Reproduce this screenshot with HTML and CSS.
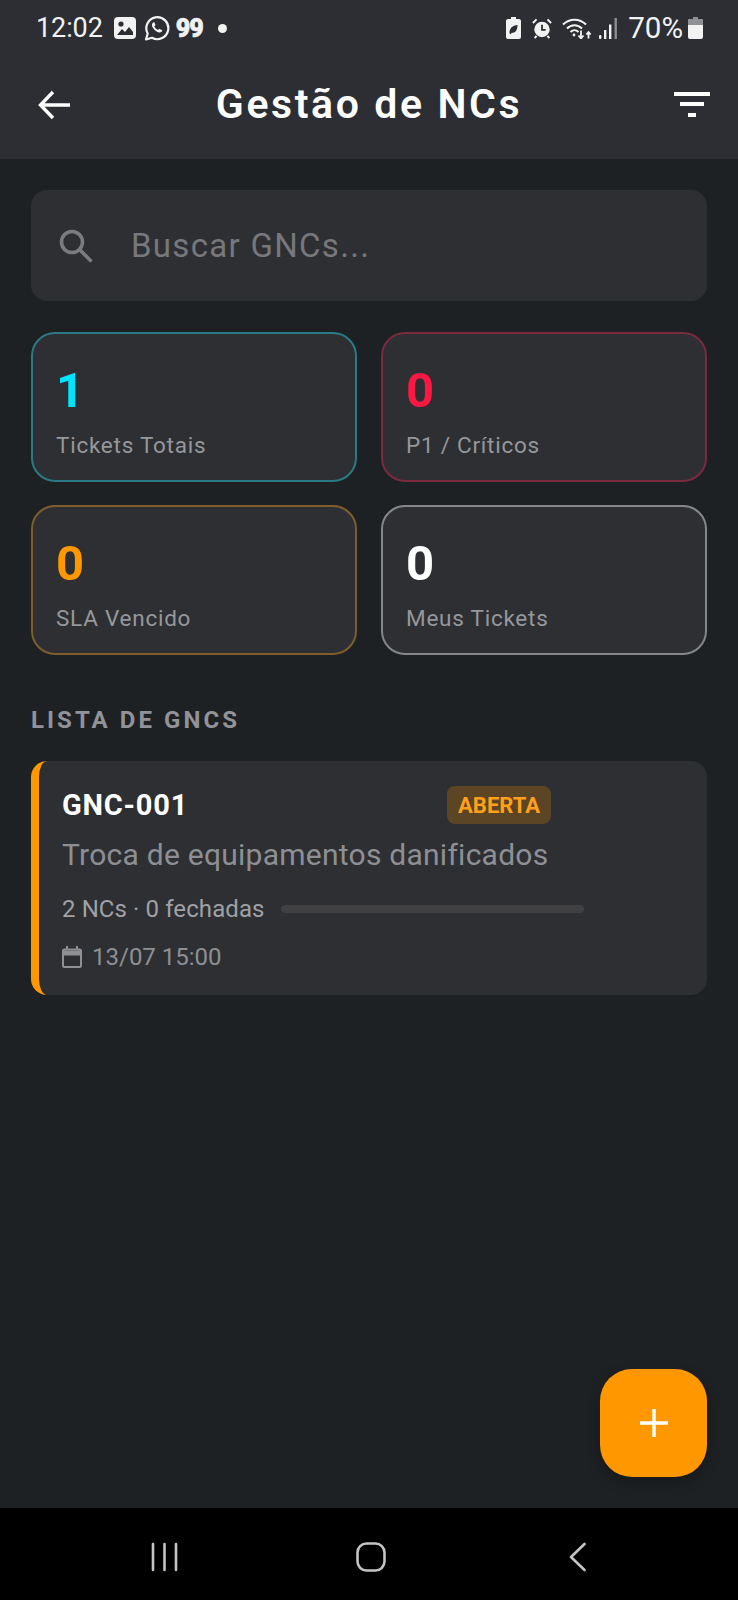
FILE: index.html
```html
<!DOCTYPE html>
<html lang="pt-BR">
<head>
    <meta charset="UTF-8">
    <meta name="viewport" content="width=device-width, initial-scale=1.0">
    <title>Gestão de NCs</title>
    <link rel="stylesheet" href="styles.css">
</head>
<body>
    <div class="top">
        <div class="status-bar">
            <div class="status-left">
                <span class="clock">12:02</span>
                <svg class="ic-photo" viewBox="0 0 22 22"><rect x="0" y="0" width="22" height="22" rx="4" fill="#f2f2f2"/><circle cx="7" cy="7" r="2.600" fill="#2c2e33"/><path d="M3 18l5-6 3 3 4-5 4 5v3H3z" fill="#2c2e33"/></svg>
                <svg class="ic-whatsapp" viewBox="0 0 26 26" fill="none"><path d="M2 24.500l1.700-6A11 11 0 1 1 8 22.800z" stroke="#f2f2f2" stroke-width="2.200" stroke-linejoin="round"/><path d="M9.200 7.500c-1.500 1-1.800 3-.3 5.300 1.500 2.400 3.800 4.300 6.200 4.700 1.600.2 3-.7 3.200-2.200l-3-1.600-1.300 1.300c-1.500-.6-3-2.200-3.700-3.700l1.200-1.300-1.300-2.900z" fill="#f2f2f2"/></svg>
                <span class="app-99">99</span>
                <span class="dot"></span>
            </div>
            <div class="status-right">
                <svg class="ic-saver" viewBox="0 0 15 22"><path d="M5 0h5v2h3a2 2 0 0 1 2 2v16a2 2 0 0 1-2 2H2a2 2 0 0 1-2-2V4a2 2 0 0 1 2-2h3z" fill="#f2f2f2"/><path d="M3.500 16c0-5 3-7.500 8-8 0 5-2 8-6 8l-1 1.500z" fill="#2c2e33"/></svg>
                <svg class="ic-alarm" viewBox="0 0 22 22"><circle cx="11" cy="12" r="8.500" fill="#f2f2f2"/><path d="M11 7v5.500h4" stroke="#2c2e33" stroke-width="2" fill="none"/><path d="M1 5l4-4M21 5l-4-4M5 19l-2 2.500M17 19l2 2.500" stroke="#f2f2f2" stroke-width="2.200" fill="none"/></svg>
                <svg class="ic-wifi" viewBox="0 0 30 22" fill="none" stroke="#f2f2f2"><path d="M1 7.500C7.500 1 17.500 1 24 7.500" stroke-width="2"/><path d="M5 11.500c4.500-4.500 10.500-4.500 15 0" stroke-width="2"/><path d="M8.500 15c2.500-2.500 5.500-2.500 8 0" stroke-width="2"/><circle cx="12" cy="18" r="1.400" fill="#f2f2f2" stroke="none"/><path d="M19 13.500v7.500M16.500 18.500l2.500 3 2.500-3" stroke-width="1.800"/><path d="M26.500 21.500v-6M24.300 17.500l2.200-2.500 2.200 2.500" stroke-width="1.800"/></svg>
                <svg class="ic-signal" viewBox="0 0 18 21"><rect x="0" y="17" width="2.400" height="4" rx="1" fill="#f2f2f2"/><rect x="5" y="12" width="2.400" height="9" fill="#f2f2f2"/><rect x="10" y="6.500" width="2.400" height="14.500" fill="#f2f2f2"/><rect x="15.500" y="0" width="2.400" height="21" fill="#8b8d90"/></svg>
                <span class="battery-text">70%</span>
                <svg class="ic-battery" viewBox="0 0 15 22"><path d="M5 0h5v2h3a2 2 0 0 1 2 2v16a2 2 0 0 1-2 2H2a2 2 0 0 1-2-2V4a2 2 0 0 1 2-2h3z" fill="#f2f2f2"/><path d="M5 0h5v2h3a2 2 0 0 1 2 2v4H0V4a2 2 0 0 1 2-2h3z" fill="#8f9093"/></svg>
            </div>
        </div>
        <header class="app-bar">
            <svg class="ic-back" viewBox="0 0 32 30" fill="none" stroke="#fff" stroke-width="3.400"><path d="M32 15H3M15 2L2.500 15 15 28"/></svg>
            <h1>Gestão de NCs</h1>
            <svg class="ic-filter" viewBox="0 0 36 25" fill="#fff"><rect x="0" y="0" width="36" height="4"/><rect x="6" y="10" width="24" height="4"/><rect x="14" y="21" width="8" height="4"/></svg>
        </header>
    </div>

    <main class="content">
        <div class="search">
            <svg class="ic-search" viewBox="0 0 36 36" fill="none" stroke="#7b7c80" stroke-width="3.600"><circle cx="14" cy="14" r="10.500"/><path d="M22 22l11.500 11.500"/></svg>
            <span>Buscar GNCs...</span>
        </div>

        <div class="stats">
            <div class="stat stat-blue"><strong>1</strong><span>Tickets Totais</span></div>
            <div class="stat stat-red"><strong>0</strong><span>P1 / Críticos</span></div>
            <div class="stat stat-orange"><strong>0</strong><span>SLA Vencido</span></div>
            <div class="stat stat-white"><strong>0</strong><span>Meus Tickets</span></div>
        </div>

        <h2 class="section-title">LISTA DE GNCS</h2>

        <article class="gnc-card">
            <div class="gnc-head">
                <span class="gnc-id">GNC-001</span>
                <span class="badge">ABERTA</span>
            </div>
            <p class="gnc-desc">Troca de equipamentos danificados</p>
            <div class="gnc-progress">
                <span>2 NCs · 0 fechadas</span>
                <div class="bar"></div>
            </div>
            <div class="gnc-date">
                <svg class="ic-cal" viewBox="0 0 20 22" fill="none" stroke="#8f9094" stroke-width="2"><rect x="1" y="3.500" width="18" height="17.500" rx="1.500"/><path d="M1 7h18" stroke-width="5"/><path d="M5 0v4M15 0v4"/></svg>
                <span>13/07 15:00</span>
            </div>
        </article>

        <button class="fab" aria-label="Novo">
            <svg viewBox="0 0 28 28" stroke="#fff" stroke-width="3.400"><path d="M0 14h28M14 0v28"/></svg>
        </button>
    </main>

    <nav class="nav-bar">
        <svg class="ic-recent" viewBox="0 0 27 30" stroke="#c4c4c4" stroke-width="2.600" stroke-linecap="round"><path d="M2 2v26M13.500 2v26M25 2v26"/></svg>
        <svg class="ic-home" viewBox="0 0 30 30" fill="none" stroke="#c4c4c4" stroke-width="2.600"><rect x="1.500" y="1.500" width="27" height="27" rx="9"/></svg>
        <svg class="ic-navback" viewBox="0 0 17 30" fill="none" stroke="#c4c4c4" stroke-width="2.600" stroke-linecap="round" stroke-linejoin="round"><path d="M15.500 2L2 15l13.500 13"/></svg>
    </nav>
</body>
</html>
```

FILE: styles.css
```css
* {
    margin: 0;
    padding: 0;
    box-sizing: border-box;
}
body {
    width: 738px;
    height: 1600px;
    overflow: hidden;
    display: flex;
    flex-direction: column;
    font-family: Roboto, "Liberation Sans", sans-serif;
    background: #1e2124;
    color: #fff;
}
svg {
    display: block;
    flex: none;
}

/* top */
.top {
    height: 159px;
    background: #2c2e33;
}
.status-bar {
    height: 56px;
    padding: 0 35px 0 36px;
    display: flex;
    align-items: center;
    justify-content: space-between;
    color: #f2f2f2;
}
.status-left, .status-right {
    display: flex;
    align-items: center;
}
.clock {
    font-size: 27px;
    letter-spacing: -.1px;
    margin-right: 11px;
}
.ic-photo {
    width: 22px;
    height: 22px;
    margin-right: 8px;
}
.ic-whatsapp {
    width: 26px;
    height: 26px;
    margin-right: 6px;
}
.app-99 {
    font-size: 25px;
    font-weight: 900;
    letter-spacing: -1px;
    -webkit-text-stroke: .6px #f2f2f2;
    margin-right: 15px;
}
.dot {
    width: 9px;
    height: 9px;
    border-radius: 50%;
    background: #f2f2f2;
}
.ic-saver {
    width: 15px;
    height: 22px;
    margin-right: 11px;
}
.ic-alarm {
    width: 20px;
    height: 21px;
    margin-right: 10px;
}
.ic-wifi {
    width: 30px;
    height: 22px;
    margin-right: 7px;
}
.ic-signal {
    width: 18px;
    height: 21px;
    margin-right: 11px;
}
.battery-text {
    font-size: 29.500px;
    margin-right: 5px;
}
.ic-battery {
    width: 15px;
    height: 22px;
}
.app-bar {
    height: 103px;
    padding: 0 28px 6px;
    display: grid;
    grid-template-columns: 1fr auto 1fr;
    align-items: center;
}
.ic-back {
    width: 32px;
    height: 30px;
    margin-left: 10px;
}
.app-bar h1 {
    margin-bottom: 2px;
    font-size: 41px;
    font-weight: 600;
    letter-spacing: 2.600px;
}
.ic-filter {
    width: 36px;
    height: 25px;
    justify-self: end;
}

/* content */
.content {
    flex: 1;
    position: relative;
    padding: 31px 31px 0;
}
.search {
    height: 111px;
    padding: 0 33px 0 27px;
    display: flex;
    align-items: center;
    gap: 37px;
    background: #2d2f33;
    border-radius: 16px;
    font-size: 33px;
    letter-spacing: 1.300px;
    color: #77787c;
}
.ic-search {
    width: 36px;
    height: 36px;
}
.stats {
    margin-top: 31px;
    display: grid;
    grid-template-columns: 326px 326px;
    grid-auto-rows: 150px;
    justify-content: space-between;
    row-gap: 23px;
}
.stat {
    padding: 7px 23px 0;
    display: flex;
    flex-direction: column;
    justify-content: center;
    background: #2d2f33;
    border: 2px solid;
    border-radius: 24px;
}
.stat strong {
    font-size: 49px;
    line-height: 58px;
    font-weight: 700;
}
.stat span {
    margin-top: 11px;
    font-size: 22.500px;
    line-height: 28px;
    letter-spacing: .75px;
    color: #96979b;
}
.stat-blue { border-color: #2a7a84; }
.stat-blue strong { color: #00e5ff; }
.stat-red { border-color: #7c2a40; }
.stat-red strong { color: #ff1744; }
.stat-orange { border-color: #7d5d2c; }
.stat-orange strong { color: #ff9800; }
.stat-white { border-color: #84868a; }

.section-title {
    margin-top: 51px;
    font-size: 24px;
    line-height: 28px;
    font-weight: 700;
    letter-spacing: 3.050px;
    color: #929398;
}
.gnc-card {
    height: 234px;
    margin-top: 27px;
    padding: 25px 0 0 23px;
    background: #2d2f33;
    border-left: 8px solid #ff9800;
    border-radius: 16px;
}
.gnc-head {
    width: 489px;
    display: flex;
    align-items: center;
    justify-content: space-between;
}
.gnc-id {
    font-size: 29px;
    font-weight: 700;
    letter-spacing: .8px;
}
.badge {
    height: 38px;
    padding: 0 11px;
    display: flex;
    align-items: center;
    background: #5c4525;
    border-radius: 8px;
    font-size: 22px;
    font-weight: 700;
    color: #ff9f1a;
}
.gnc-desc {
    margin-top: 11px;
    font-size: 30px;
    line-height: 40px;
    letter-spacing: .25px;
    color: #8e8f94;
}
.gnc-progress {
    width: 522px;
    margin-top: 19px;
    display: flex;
    align-items: center;
    gap: 16px;
    font-size: 24px;
    line-height: 30px;
    letter-spacing: .1px;
    color: #a0a1a5;
}
.bar {
    flex: 1;
    height: 8px;
    background: #403f41;
    border-radius: 4px;
}
.gnc-date {
    margin-top: 18px;
    display: flex;
    align-items: center;
    gap: 10px;
    font-size: 24px;
    line-height: 30px;
    color: #8e8f94;
}
.ic-cal {
    width: 20px;
    height: 22px;
}
.fab {
    position: absolute;
    right: 31px;
    bottom: 31px;
    width: 107px;
    height: 108px;
    display: flex;
    align-items: center;
    justify-content: center;
    background: #ff9800;
    border: 0;
    border-radius: 32px;
    box-shadow: 0 6px 14px rgba(0, 0, 0, 0.25);
}
.fab svg {
    width: 28px;
    height: 28px;
}

/* system nav */
.nav-bar {
    height: 92px;
    flex: none;
    background: #000;
    position: relative;
}
.nav-bar svg {
    position: absolute;
    top: 34px;
    height: 30px;
}
.ic-recent {
    left: 151px;
    width: 27px;
}
.ic-home {
    left: 356px;
    width: 30px;
}
.ic-navback {
    left: 569px;
    width: 17px;
}
```
